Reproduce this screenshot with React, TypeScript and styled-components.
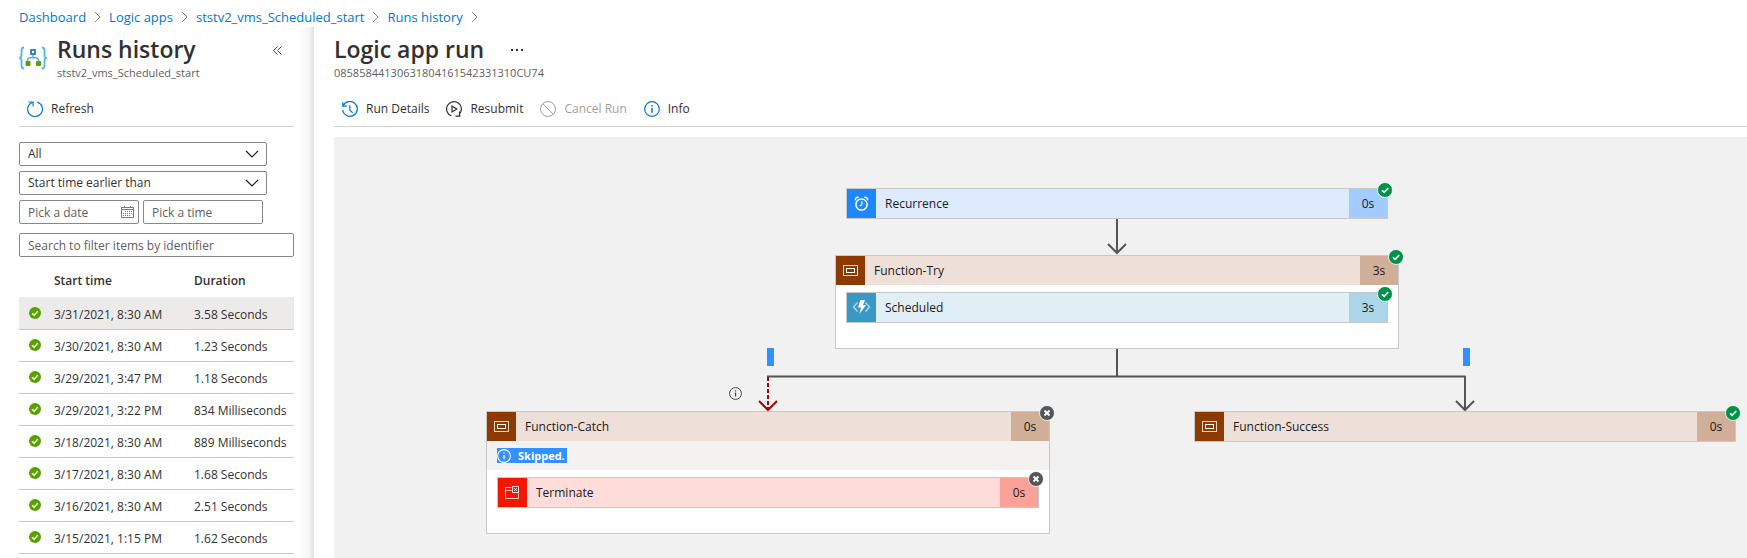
import React from "react";
import styled, { createGlobalStyle, css } from "styled-components";

const GlobalStyle = createGlobalStyle`
  *, *::before, *::after { box-sizing: border-box; }
  body {
    margin: 0;
    background: #fff;
    color: #323130;
    font-family: "Open Sans", "Noto Sans", sans-serif;
    font-size: 13px;
    line-height: 18px;
  }
  button, input, select { font: inherit; color: inherit; }
`;

const Page = styled.div`
  min-height: 100vh;
  display: flex;
  flex-direction: column;
`;

const Breadcrumb = styled.nav`
  display: flex;
  align-items: center;
  gap: 8px;
  height: 27px;
  padding: 7px 19px 0;
  svg { flex: none; }
`;

const Crumb = styled.a`
  color: #0078d4;
  text-decoration: none;
  white-space: nowrap;
`;

const Body = styled.div`
  flex: 1;
  display: flex;
`;

const Sidebar = styled.aside`
  flex: none;
  width: 314px;
  padding: 8px 20px 0 19px;
  background: linear-gradient(to left, #e2e2e2 0, #f4f4f4 5px, #fff 15px) no-repeat right / 15px 100%;
`;

const Main = styled.main`
  flex: 1;
  min-width: 0;
  display: flex;
  flex-direction: column;
  padding: 8px 0 0 20px;
`;

const Header = styled.header`
  display: flex;
  align-items: flex-start;
  gap: 10px;
  height: 53px;
`;

const LogoSlot = styled.div`
  width: 28px;
  padding-top: 11px;
  svg { display: block; }
`;

const Title = styled.h1`
  margin: 0;
  font-size: 23px;
  line-height: 28px;
  font-weight: 600;
  white-space: nowrap;
`;

const Subtitle = styled.p`
  margin: 2px 0 0;
  font-size: 11px;
  line-height: 16px;
  color: #605e5c;
`;

const TitleRow = styled.div`
  display: flex;
  align-items: flex-start;
  gap: 27px;
  height: 28px;
`;

const GlyphButton = styled.button<{ $push?: boolean }>`
  display: flex;
  align-items: center;
  height: 30px;
  border: 0;
  padding: 0;
  background: none;
  ${(p) => p.$push && css`margin: 0 12px 0 auto;`}
`;

const Toolbar = styled.div`
  display: flex;
  align-items: center;
  gap: 17px;
  height: 39px;
  padding: 4px 0 0 8px;
  border-bottom: 1px solid #d2d0ce;
`;

const Command = styled.button`
  display: flex;
  align-items: center;
  gap: 8px;
  border: 0;
  padding: 0;
  background: none;
  white-space: nowrap;
  font-size: 12px;
  &:disabled { color: #a19f9d; }
`;

const Filters = styled.form`
  display: flex;
  flex-direction: column;
  gap: 5px;
  padding-top: 15px;
`;

const SelectBox = styled.label`
  position: relative;
  width: 248px;
  svg {
    position: absolute;
    right: 8px;
    top: 8px;
    pointer-events: none;
  }
`;

const field = css`
  display: block;
  width: 100%;
  height: 24px;
  padding: 0 8px;
  border: 1px solid #8a8886;
  border-radius: 2px;
  background: #fff;
  font-size: 12px;
  line-height: 16px;
`;

const Select = styled.select`
  ${field}
  appearance: none;
`;

const Input = styled.input`
  ${field}
  &::placeholder { color: #605e5c; opacity: 1; }
`;

const DateRow = styled.div`
  display: flex;
  gap: 4px;
`;

const FieldBox = styled.label`
  position: relative;
  width: 120px;
  svg {
    position: absolute;
    right: 5px;
    top: 6px;
  }
`;

const SearchBox = styled.label`
  margin-top: 4px;
`;

const RunsTable = styled.table`
  width: 100%;
  margin-top: 8px;
  border-collapse: collapse;
  table-layout: fixed;
  font-size: 12px;
  line-height: 16px;
  white-space: nowrap;
  th {
    height: 32px;
    padding: 0;
    text-align: left;
    font-weight: 600;
  }
  td {
    height: 32px;
    padding: 4px 0 0;
    border-bottom: 1px solid #c8c6c4;
  }
`;

const RunRow = styled.tr<{ $selected?: boolean }>`
  background: ${(p) => (p.$selected ? "#edebe9" : "transparent")};
`;

const StatusCell = styled.td`
  && { padding: 0 0 0 10px; }
  svg { display: block; }
`;

const StatusColumn = styled.col`width: 35px;`;
const StartColumn = styled.col`width: 140px;`;

const Canvas = styled.section`
  position: relative;
  flex: 1;
  min-height: 420px;
  margin-top: 10px;
  overflow: hidden;
  background: #f1f1f1;
  color: #1b1a19;
  font-size: 12px;
`;

const Connectors = styled.svg`
  position: absolute;
  left: 0;
  top: 0;
`;

const Placed = styled.div<{ $x: number; $y: number; $w: number }>`
  position: absolute;
  left: ${(p) => p.$x}px;
  top: ${(p) => p.$y}px;
  width: ${(p) => p.$w}px;
`;

const Card = styled.article`
  position: relative;
  border: 1px solid #c8c8c8;
  background: #fff;
`;

const CardBar = styled.div<{ $bg: string }>`
  display: flex;
  height: 29px;
  line-height: 29px;
  background: ${(p) => p.$bg};
`;

const CardIcon = styled.div<{ $bg: string }>`
  width: 29px;
  background: ${(p) => p.$bg};
  svg { display: block; }
`;

const CardName = styled.div`
  flex: 1;
  padding-left: 9px;
`;

const CardTime = styled.div<{ $bg: string }>`
  width: 38px;
  text-align: center;
  background: ${(p) => p.$bg};
`;

const CardBody = styled.div`
  padding: 7px 10px 25px;
`;

const Notice = styled.div`
  display: flex;
  align-items: center;
  height: 29px;
  padding-left: 10px;
  background: #f3f2f1;
`;

const NoticeText = styled.span`
  display: flex;
  align-items: center;
  gap: 7px;
  height: 15px;
  padding-right: 2px;
  background: #3390ff;
  color: #fff;
  font-size: 11px;
  font-weight: 700;
`;

const BadgeSlot = styled.div`
  position: absolute;
  right: -6px;
  top: -7px;
  svg { display: block; }
`;

const Marker = styled.div`
  height: 18px;
  background: #3390ff;
`;

const Chevron = () => (
  <svg width="7" height="12" viewBox="0 0 7 12" fill="none" stroke="#8a8886">
    <path d="M1 1l5 5-5 5" />
  </svg>
);

const DownChevron = () => (
  <svg width="14" height="9" viewBox="0 0 14 9" fill="none" stroke="#201f1e" strokeWidth="1.2">
    <path d="M1 1l6 6 6-6" />
  </svg>
);

const LogicAppIcon = () => (
  <svg width="28" height="24" viewBox="0 0 28 24" fill="none">
    <path d="M5 1.5C2.8 1.500 2.500 2.600 2.500 4.500V9c0 1.800-.6 2.600-2 3 1.400.4 2 1.200 2 3v4.500c0 2 .4 3 2.500 3M23 1.500c2.200 0 2.500 1.100 2.500 3V9c0 1.800.6 2.600 2 3-1.400.4-2 1.200-2 3v4.500c0 2-.4 3-2.500 3" stroke="#50b8dc" strokeWidth="1.800" />
    <path d="M14 8v3.500M8.500 16v-1.500c0-2 1-2.800 2.800-2.800h5.400c1.800 0 2.800.8 2.800 2.800V16" stroke="#5cb3dd" strokeWidth="1.500" />
    <rect x="12" y="4" width="4" height="4" fill="#fff" stroke="#0f6cbd" strokeWidth="1.600" />
    <rect x="6.500" y="15" width="5" height="5" rx="1" fill="#57a300" />
    <rect x="17" y="15" width="5" height="5" rx="1" fill="#57a300" />
  </svg>
);

const CollapseIcon = () => (
  <svg width="9" height="9" viewBox="0 0 9 9" fill="none" stroke="#484644">
    <path d="M4.500.5l-4 4 4 4M8.500.5l-4 4 4 4" />
  </svg>
);

const MoreIcon = () => (
  <svg width="12" height="4" viewBox="0 0 12 4" fill="#323130">
    <rect x="0" y="1" width="2" height="2" />
    <rect x="5" y="1" width="2" height="2" />
    <rect x="10" y="1" width="2" height="2" />
  </svg>
);

const RefreshIcon = () => (
  <svg width="16" height="16" viewBox="0 0 16 16" fill="none" stroke="#0078d4" strokeWidth="1.200">
    <path d="M10.300 1.100A7.400 7.400 0 1 1 5.500 1.200M1.500 1h4.600v4.500" />
  </svg>
);

const HistoryIcon = () => (
  <svg width="16" height="16" viewBox="0 0 16 16" fill="none" stroke="#0078d4" strokeWidth="1.200">
    <path d="M1.200 4.700A7.400 7.400 0 1 1 .6 9M.8 1.200v4h4M7.800 4.300v4.900l3 2.700" />
  </svg>
);

const ResubmitIcon = () => (
  <svg width="16" height="16" viewBox="0 0 16 16" fill="none" stroke="#323130" strokeWidth="1.200">
    <path d="M5.500 15A7.400 7.400 0 1 1 13.300 13.200M13.500 10.500v4.800M14.500 15.200h-5" />
    <path d="M6 5l4.800 3L6 11z" />
  </svg>
);

const CancelIcon = () => (
  <svg width="16" height="16" viewBox="0 0 16 16" fill="none" stroke="#a19f9d">
    <circle cx="8" cy="8" r="7.500" />
    <path d="M2.700 2.700l10.600 10.600" />
  </svg>
);

const InfoIcon = ({ size = 16, color = "#0078d4" }: { size?: number; color?: string }) => (
  <svg width={size} height={size} viewBox="0 0 16 16" fill="none" stroke={color} strokeWidth="1.200">
    <circle cx="8" cy="8" r="7.300" />
    <path d="M8 6.800v5M8 4v1.500" strokeWidth="1.500" />
  </svg>
);

const CalendarIcon = () => (
  <svg width="13" height="12" viewBox="0 0 13 12" fill="none" stroke="#7a7876">
    <path d="M.5 1.500h12v10H.5zM.5 3.500h12M3.500 0v2M9.500 0v2" />
    <path d="M4 5.500h7M2 7.500h9M2 9.500h7" strokeDasharray="1 1" />
  </svg>
);

const SuccessDot = () => (
  <svg width="12" height="12" viewBox="0 0 12 12" fill="none" role="img" aria-label="Succeeded">
    <circle cx="6" cy="6" r="6" fill="#57a300" />
    <path d="M3.200 6.200l2 2 3.600-4" stroke="#fff" strokeWidth="1.500" />
  </svg>
);

const Badge = ({ ok }: { ok: boolean }) => (
  <svg width="16" height="16" viewBox="0 0 16 16" fill="none" role="img" aria-label={ok ? "Succeeded" : "Skipped"}>
    <circle cx="8" cy="8" r="7.500" fill={ok ? "#009246" : "#54575a"} stroke="#fff" strokeWidth=".8" />
    {ok ? (
      <path d="M5 8.200l2.100 2.100L11.300 6" stroke="#fff" strokeWidth="1.600" />
    ) : (
      <path d="M5.500 5.500l5 5M10.500 5.500l-5 5" stroke="#fff" strokeWidth="1.800" />
    )}
  </svg>
);

const ClockGlyph = () => (
  <svg width="29" height="29" viewBox="0 0 29 29" fill="none" stroke="#fff" strokeWidth="1.500">
    <circle cx="14.500" cy="15.500" r="5.600" />
    <path d="M14.800 12.300v3.400l-2 1.300" strokeWidth="1.200" />
    <path d="M8.500 11.300c-.6-1.600 1-3.400 3.300-2.800M20.500 11.300c.6-1.600-1-3.400-3.300-2.800" />
  </svg>
);

const ScopeGlyph = () => (
  <svg width="29" height="29" viewBox="0 0 29 29" fill="none" stroke="#fff">
    <rect x="7.500" y="9.500" width="14" height="10" strokeOpacity=".8" />
    <rect x="10.500" y="12.500" width="8" height="4" />
  </svg>
);

const FunctionGlyph = () => (
  <svg width="29" height="29" viewBox="0 0 29 29" fill="none">
    <path d="M10.500 9.500L6.500 14l4 4.500M18.500 9.500l4 4.500-4 4.500" stroke="#b6dced" strokeWidth="1.300" />
    <path d="M13.500 7h4.500l-2 5h3l-6.500 9 1.500-6.500h-3z" fill="#fff" />
  </svg>
);

const TerminateGlyph = () => (
  <svg width="29" height="29" viewBox="0 0 29 29" fill="none" stroke="#ffd0cc">
    <path d="M13.500 9.500h-6v11h13v-5M7.500 12.500h6" />
    <rect x="14.500" y="8.500" width="6" height="6" />
    <path d="M16 10l3 3M19 10l-3 3" />
  </svg>
);

const palettes = {
  trigger: { icon: "#1e86ff", bar: "#deebff", time: "#a2cbff", glyph: <ClockGlyph /> },
  scope: { icon: "#8c3a00", bar: "#eee0d9", time: "#d1ae98", glyph: <ScopeGlyph /> },
  func: { icon: "#3999c6", bar: "#e0eef5", time: "#abd5e8", glyph: <FunctionGlyph /> },
  stop: { icon: "#f41700", bar: "#fddcda", time: "#fba298", glyph: <TerminateGlyph /> },
};

type NodeProps = {
  kind: keyof typeof palettes;
  name: string;
  time: string;
  ok?: boolean;
  children?: React.ReactNode;
};

const Node = ({ kind, name, time, ok = true, children }: NodeProps) => {
  const p = palettes[kind];
  return (
    <Card>
      <CardBar $bg={p.bar}>
        <CardIcon $bg={p.icon}>{p.glyph}</CardIcon>
        <CardName>{name}</CardName>
        <CardTime $bg={p.time}>{time}</CardTime>
      </CardBar>
      {children}
      <BadgeSlot><Badge ok={ok} /></BadgeSlot>
    </Card>
  );
};

const crumbs = ["Dashboard", "Logic apps", "ststv2_vms_Scheduled_start", "Runs history"];

const runs = [
  ["3/31/2021, 8:30 AM", "3.58 Seconds"],
  ["3/30/2021, 8:30 AM", "1.23 Seconds"],
  ["3/29/2021, 3:47 PM", "1.18 Seconds"],
  ["3/29/2021, 3:22 PM", "834 Milliseconds"],
  ["3/18/2021, 8:30 AM", "889 Milliseconds"],
  ["3/17/2021, 8:30 AM", "1.68 Seconds"],
  ["3/16/2021, 8:30 AM", "2.51 Seconds"],
  ["3/15/2021, 1:15 PM", "1.62 Seconds"],
];

export default function App() {
  return (
    <Page>
      <GlobalStyle />
      <Breadcrumb aria-label="Breadcrumb">
        {crumbs.map((c) => (
          <React.Fragment key={c}>
            <Crumb href="#">{c}</Crumb>
            <Chevron />
          </React.Fragment>
        ))}
      </Breadcrumb>
      <Body>
        <Sidebar>
          <Header>
            <LogoSlot><LogicAppIcon /></LogoSlot>
            <div>
              <Title>Runs history</Title>
              <Subtitle>ststv2_vms_Scheduled_start</Subtitle>
            </div>
            <GlyphButton $push aria-label="Collapse"><CollapseIcon /></GlyphButton>
          </Header>
          <Toolbar>
            <Command><RefreshIcon />Refresh</Command>
          </Toolbar>
          <Filters>
            <SelectBox>
              <Select aria-label="Status"><option>All</option></Select>
              <DownChevron />
            </SelectBox>
            <SelectBox>
              <Select aria-label="Time filter"><option>Start time earlier than</option></Select>
              <DownChevron />
            </SelectBox>
            <DateRow>
              <FieldBox>
                <Input aria-label="Date" placeholder="Pick a date" />
                <CalendarIcon />
              </FieldBox>
              <FieldBox>
                <Input aria-label="Time" placeholder="Pick a time" />
              </FieldBox>
            </DateRow>
            <SearchBox>
              <Input aria-label="Search" placeholder="Search to filter items by identifier" />
            </SearchBox>
          </Filters>
          <RunsTable>
            <colgroup><StatusColumn /><StartColumn /><col /></colgroup>
            <thead>
              <tr><th aria-label="Status" /><th>Start time</th><th>Duration</th></tr>
            </thead>
            <tbody>
              {runs.map(([start, duration], i) => (
                <RunRow key={start} $selected={i === 0}>
                  <StatusCell><SuccessDot /></StatusCell>
                  <td>{start}</td>
                  <td>{duration}</td>
                </RunRow>
              ))}
            </tbody>
          </RunsTable>
        </Sidebar>
        <Main>
          <Header>
            <div>
              <TitleRow>
                <Title>Logic app run</Title>
                <GlyphButton aria-label="More"><MoreIcon /></GlyphButton>
              </TitleRow>
              <Subtitle>08585844130631804161542331310CU74</Subtitle>
            </div>
          </Header>
          <Toolbar>
            <Command><HistoryIcon />Run Details</Command>
            <Command><ResubmitIcon />Resubmit</Command>
            <Command disabled><CancelIcon />Cancel Run</Command>
            <Command><InfoIcon />Info</Command>
          </Toolbar>
          <Canvas>
            <Connectors width="1413" height="420" viewBox="0 0 1413 420" fill="none" stroke="#555" strokeWidth="2">
              <path d="M783 82v34M774 107l9 9 9-9" />
              <path d="M783 212v27M433 239.500h698.500M1131 239v34M1122 264l9 9 9-9" />
              <path d="M434 240v33" stroke="#a80000" strokeDasharray="4 2" />
              <path d="M425 264l9 9 9-9" stroke="#a80000" />
            </Connectors>
            <Placed $x={512} $y={51} $w={542}>
              <Node kind="trigger" name="Recurrence" time="0s" />
            </Placed>
            <Placed $x={501} $y={118} $w={564}>
              <Node kind="scope" name="Function-Try" time="3s">
                <CardBody><Node kind="func" name="Scheduled" time="3s" /></CardBody>
              </Node>
            </Placed>
            <Placed $x={433} $y={211} $w={7}><Marker /></Placed>
            <Placed $x={1129} $y={211} $w={7}><Marker /></Placed>
            <Placed $x={395} $y={250} $w={13}><InfoIcon size={13} color="#484644" /></Placed>
            <Placed $x={152} $y={274} $w={564}>
              <Node kind="scope" name="Function-Catch" time="0s" ok={false}>
                <Notice>
                  <NoticeText><InfoIcon size={14} color="#fff" />Skipped.</NoticeText>
                </Notice>
                <CardBody><Node kind="stop" name="Terminate" time="0s" ok={false} /></CardBody>
              </Node>
            </Placed>
            <Placed $x={860} $y={274} $w={542}>
              <Node kind="scope" name="Function-Success" time="0s" />
            </Placed>
          </Canvas>
        </Main>
      </Body>
    </Page>
  );
}
